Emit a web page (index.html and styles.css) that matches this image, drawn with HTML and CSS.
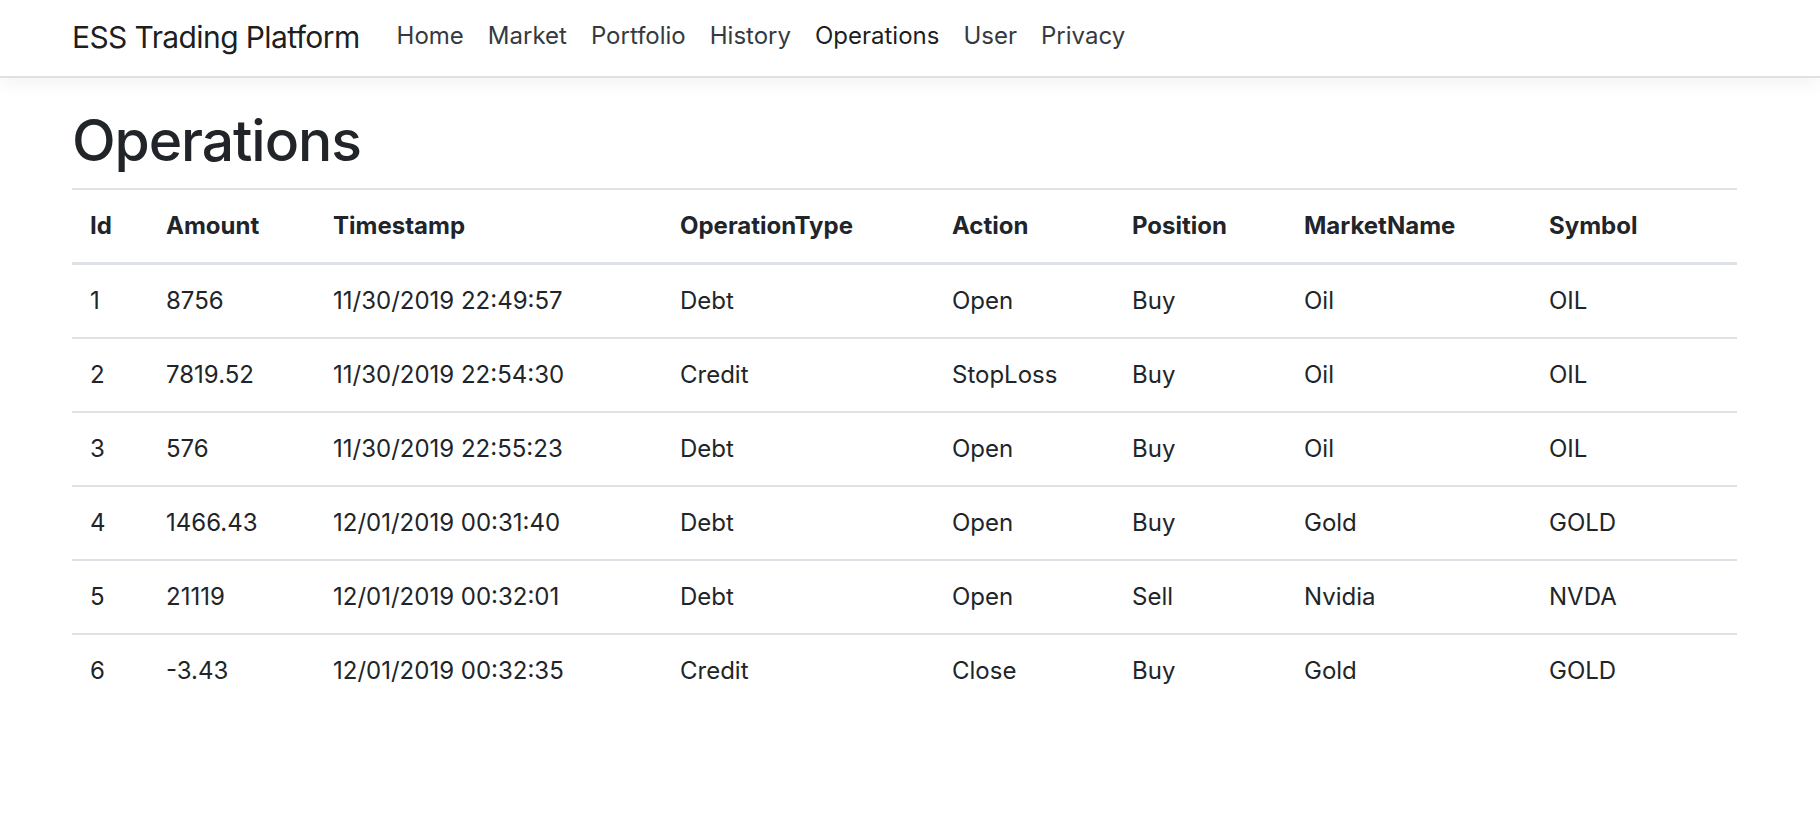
FILE: index.html
```html
<!DOCTYPE html>
<html lang="en">
<head>
<meta charset="utf-8">
<title>Operations - ESS Trading Platform</title>
<link rel="stylesheet" href="styles.css">
</head>
<body>
<header class="navbar">
  <div class="container nav-inner">
    <a class="brand" href="#">ESS Trading Platform</a>
    <ul class="nav">
      <li><a class="nav-link" href="#">Home</a></li>
      <li><a class="nav-link" href="#">Market</a></li>
      <li><a class="nav-link" href="#">Portfolio</a></li>
      <li><a class="nav-link" href="#">History</a></li>
      <li><a class="nav-link active" href="#">Operations</a></li>
      <li><a class="nav-link" href="#">User</a></li>
      <li><a class="nav-link" href="#">Privacy</a></li>
    </ul>
  </div>
</header>
<main class="container">
  <h1 class="title">Operations</h1>
  <table class="table">
    <colgroup>
      <col class="c-id"><col class="c-amount"><col class="c-ts"><col class="c-type"><col class="c-action"><col class="c-pos"><col class="c-market"><col class="c-symbol">
    </colgroup>
    <thead>
      <tr><th>Id</th><th>Amount</th><th>Timestamp</th><th>OperationType</th><th>Action</th><th>Position</th><th>MarketName</th><th>Symbol</th></tr>
    </thead>
    <tbody>
      <tr><td>1</td><td>8756</td><td>11/30/2019 22:49:57</td><td>Debt</td><td>Open</td><td>Buy</td><td>Oil</td><td>OIL</td></tr>
      <tr><td>2</td><td>7819.52</td><td>11/30/2019 22:54:30</td><td>Credit</td><td>StopLoss</td><td>Buy</td><td>Oil</td><td>OIL</td></tr>
      <tr><td>3</td><td>576</td><td>11/30/2019 22:55:23</td><td>Debt</td><td>Open</td><td>Buy</td><td>Oil</td><td>OIL</td></tr>
      <tr><td>4</td><td>1466.43</td><td>12/01/2019 00:31:40</td><td>Debt</td><td>Open</td><td>Buy</td><td>Gold</td><td>GOLD</td></tr>
      <tr><td>5</td><td>21119</td><td>12/01/2019 00:32:01</td><td>Debt</td><td>Open</td><td>Sell</td><td>Nvidia</td><td>NVDA</td></tr>
      <tr><td>6</td><td>-3.43</td><td>12/01/2019 00:32:35</td><td>Credit</td><td>Close</td><td>Buy</td><td>Gold</td><td>GOLD</td></tr>
    </tbody>
  </table>
</main>
</body>
</html>
```

FILE: styles.css
```css
* { box-sizing: border-box; }
html, body { margin: 0; padding: 0; }
body {
  font-family: Inter, "Noto Sans", "Liberation Sans", sans-serif;
  font-size: 24px;
  line-height: 36px;
  color: #212529;
  background: #fff;
}
.container {
  width: 1665px;
  margin-left: 72px;
}
.navbar {
  height: 78px;
  background: #fff;
  border-bottom: 2px solid #dee2e6;
  box-shadow: 0 6px 18px rgba(0, 0, 0, 0.05);
}
.nav-inner {
  height: 76px;
  display: flex;
  align-items: center;
}
.brand {
  font-size: 30px;
  line-height: 45px;
  padding-bottom: 2px;
  color: rgba(0, 0, 0, 0.9);
  text-decoration: none;
  letter-spacing: -0.6px;
  margin-right: 25px;
}
.nav {
  display: flex;
  list-style: none;
  margin: 0;
  padding: 0;
}
.nav-link {
  display: block;
  padding: 0 12px 5px;
  line-height: 36px;
  color: #343a40;
  text-decoration: none;
}
.nav-link.active { color: rgba(0, 0, 0, 0.9); }
.title {
  font-size: 57px;
  line-height: 68px;
  font-weight: 500;
  letter-spacing: -1.1px;
  margin: 29px 0 13px;
  color: #212529;
}
.table {
  width: 1665px;
  table-layout: fixed;
  border-collapse: collapse;
}
.table th, .table td {
  padding: 18px;
  text-align: left;
  vertical-align: top;
  border-top: 2px solid #dee2e6;
  white-space: nowrap;
}
.table th { font-weight: 700; }
.table thead th { border-bottom: 3px solid #dee2e6; }
.table tbody tr:first-child td { border-top: 0; }
.c-id { width: 76px; }
.c-amount { width: 167px; }
.c-ts { width: 347px; }
.c-type { width: 272px; }
.c-action { width: 180px; }
.c-pos { width: 172px; }
.c-market { width: 245px; }
.c-symbol { width: 206px; }
```
